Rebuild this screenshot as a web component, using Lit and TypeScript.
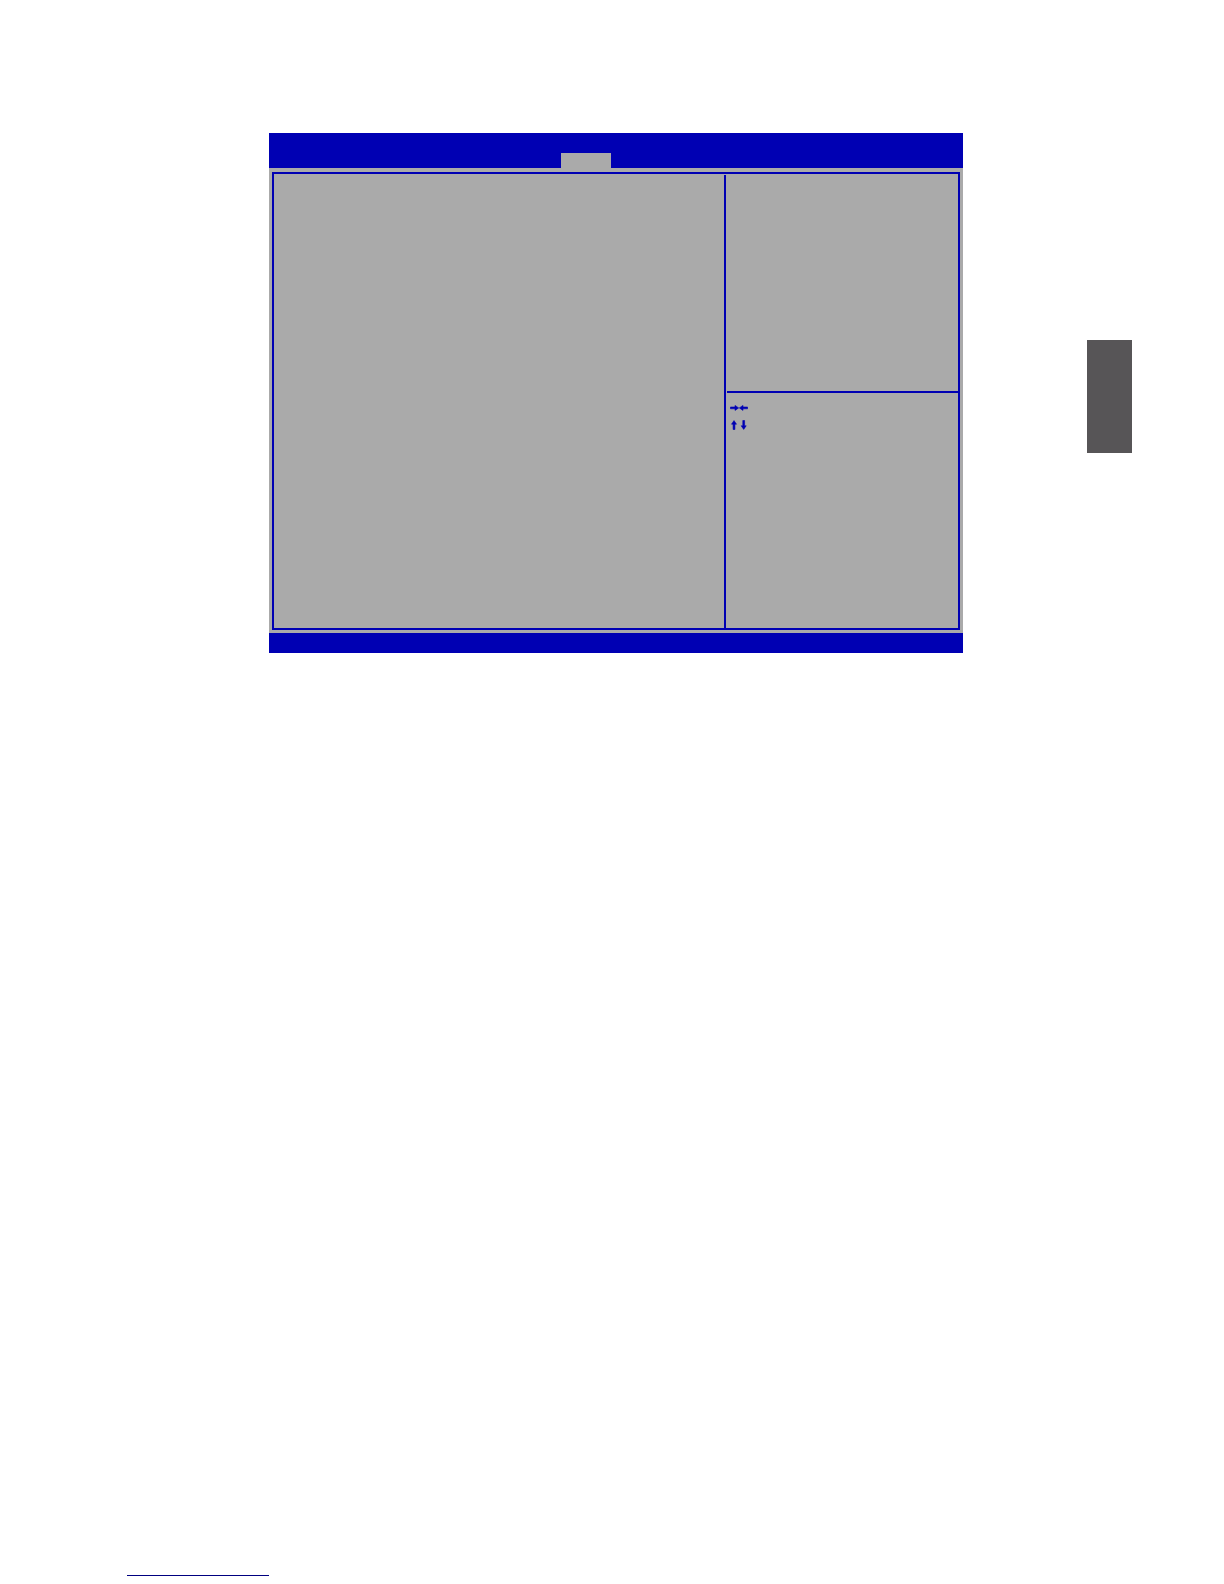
import { LitElement, html, css } from "lit";
import { customElement } from "lit/decorators.js";

@customElement("setup-screen")
class SetupScreen extends LitElement {
  static styles = css`
    :host {
      display: block;
      background: #aaaaaa;
      color: #0000b3;
    }
    .menu {
      display: grid;
      grid-template-columns: 292fr 50fr 352fr;
      align-items: end;
      height: 35px;
      background: #0000b3;
    }
    .tab {
      grid-column: 2;
      height: 15px;
      background: #aaaaaa;
    }
    .frame {
      display: grid;
      grid-template-columns: 450fr 234fr;
      margin: 4px 3px 3px;
      border: 2px solid #0000b3;
    }
    .side {
      margin-top: 1px;
      padding-left: 1px;
      border-left: 2px solid #0000b3;
    }
    .help {
      min-height: 216px;
      border-bottom: 2px solid #0000b3;
    }
    .keys {
      display: flex;
      flex-direction: column;
      gap: 7px;
      min-height: 225px;
      padding: 10px 3px 0;
    }
    .arrows {
      display: block;
      width: 18px;
      height: 10px;
      fill: currentColor;
      stroke: currentColor;
      stroke-width: 0.6;
      stroke-linejoin: round;
    }
    .footer {
      height: 20px;
      background: #0000b3;
    }
  `;

  render() {
    return html`
      <header class="menu"><div class="tab"></div></header>
      <main class="frame">
        <section></section>
        <aside class="side">
          <div class="help"></div>
          <div class="keys">
            <svg class="arrows" viewBox="0 0 18 10" role="img" aria-label="Right and left">
              <path d="M0.4 4H5V2.4L8.7 4.9L5 7.4V5.8H0.4ZM17.6 4H13V2.4L9.3 4.9L13 7.4V5.8H17.6Z" />
            </svg>
            <svg class="arrows" viewBox="0 0 18 10" role="img" aria-label="Up and down">
              <path d="M3.1 9.5V4.2H1.5L4 0.6L6.5 4.2H4.9V9.5ZM12.8 0.5V5.8H11.2L13.7 9.4L16.2 5.8H14.6V0.5Z" />
            </svg>
          </div>
        </aside>
      </main>
      <footer class="footer"></footer>
    `;
  }
}

@customElement("app-root")
class AppRoot extends LitElement {
  static styles = css`
    :host {
      display: block;
      background: #ffffff;
      font-family: "Liberation Sans", sans-serif;
    }
    .page {
      display: grid;
      grid-template-columns: 127fr 142fr 694fr 124fr 45fr 92fr;
      grid-template-rows: 1fr auto;
      align-items: start;
      box-sizing: border-box;
      min-height: 100vh;
      padding: 133px 0 8px;
    }
    .screen {
      grid-column: 3;
    }
    .marker {
      grid-column: 5;
      height: 113px;
      margin-top: 207px;
      background: #575557;
    }
    .rule {
      grid-column: 2;
      grid-row: 2;
      width: 100%;
      height: 1px;
      margin: 0;
      border: 0;
      background: #000080;
    }
  `;

  render() {
    return html`
      <div class="page">
        <setup-screen class="screen"></setup-screen>
        <div class="marker"></div>
        <hr class="rule" />
      </div>
    `;
  }
}
